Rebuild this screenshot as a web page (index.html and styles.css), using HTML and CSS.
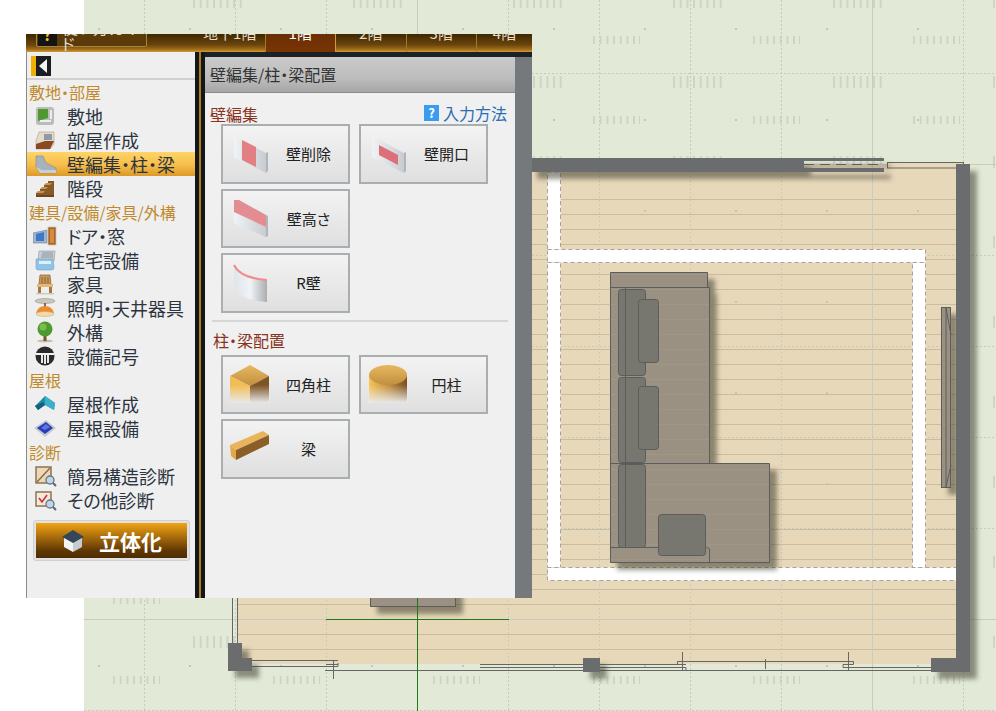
FILE: index.html
```html
<!DOCTYPE html>
<html lang="ja">
<head>
<meta charset="utf-8">
<title>壁編集/柱・梁配置</title>
<link rel="stylesheet" href="styles.css">
</head>
<body>
<div class="page">

	<!-- floor plan canvas, drawn in page coordinates -->
	<svg class="plan" viewBox="84 0 912 711" width="912" height="711">
		<defs>
			<pattern id="ticks" patternUnits="userSpaceOnUse" width="160" height="80">
				<path d="M34 -4v8M40.7 -4v8M47.4 -4v8M54 -4v8M60.7 -4v8M67.4 -4v8M74 -4v8M80.7 -4v8" stroke="#cdd5c7" stroke-width="2" transform="translate(0 4)"/>
				<path d="M34 76v8M40.7 76v8M47.4 76v8M54 76v8M60.7 76v8M67.4 76v8M74 76v8M80.7 76v8" stroke="#cdd5c7" stroke-width="2"/>
				<path d="M114 36v8M120.7 36v8M127.4 36v8M134 36v8M140.7 36v8M147.4 36v8M154 36v8M160 36v8" stroke="#cdd5c7" stroke-width="2"/>
			</pattern>
			<pattern id="dots" patternUnits="userSpaceOnUse" width="91" height="91">
				<rect x="7" y="28" width="2" height="2" fill="#bfc7bb"/>
			</pattern>
			<pattern id="planks" patternUnits="userSpaceOnUse" width="15" height="15">
				<rect x="0" y="4" width="15" height="1" fill="#cbbc9f"/>
			</pattern>
			<filter id="shade" x="-20%" y="-20%" width="140%" height="140%">
				<feDropShadow dx="7" dy="7" stdDeviation="2.5" flood-color="#3c3c30" flood-opacity=".55"/>
			</filter>
			<filter id="blurSoft"><feGaussianBlur stdDeviation=".35"/></filter>
			<linearGradient id="goldH" x1="0" x2="1" y1="0" y2="0">
				<stop offset="0" stop-color="#f7c45a"/><stop offset=".55" stop-color="#c08a3a"/><stop offset="1" stop-color="#7a5020"/>
			</linearGradient>
			<linearGradient id="goldTop" x1="0" x2="0" y1="0" y2="1">
				<stop offset="0" stop-color="#e8b860"/><stop offset="1" stop-color="#c08f40"/>
			</linearGradient>
			<linearGradient id="fade" x1="0" x2="0" y1="0" y2="1">
				<stop offset="0" stop-color="#e9e9e9" stop-opacity="0"/><stop offset="1" stop-color="#e9e9e9"/>
			</linearGradient>
			<linearGradient id="wallFace" x1="0" x2="1" y1="0" y2="0">
				<stop offset="0" stop-color="#f0f3f6"/><stop offset="1" stop-color="#c8ccd0"/>
			</linearGradient>
			<linearGradient id="rWall" x1="0" x2="1" y1="0" y2="0">
				<stop offset="0" stop-color="#dfe5ea"/><stop offset=".5" stop-color="#f0f3f6"/><stop offset="1" stop-color="#a9adb0"/>
			</linearGradient>
			<linearGradient id="capGrad" x1="0" x2="0" y1="0" y2="1">
				<stop offset="0" stop-color="#3c3c3c"/><stop offset="1" stop-color="#1c2a38"/>
			</linearGradient>
		</defs>

		<rect x="84" y="0" width="912" height="711" fill="#e2ead7"/>
		<rect x="84" y="0" width="912" height="711" fill="url(#ticks)"/>

		<rect x="237" y="165" width="719" height="499" fill="#e8d8ba"/>
		<rect x="237" y="190" width="719" height="474" fill="url(#planks)"/>
		<rect x="84" y="0" width="912" height="711" fill="url(#dots)"/>

		<!-- grid -->
		<g fill="none" stroke="#c4cbbf" stroke-width="1">
			<path stroke-dasharray="2 2" d="M144.5 0V711M235.5 0V711M326.5 0V711M508.5 0V711M599.5 0V711M690.5 0V711M781.5 0V711M963.5 0V711M84 73.5H996M84 255.5H996M84 346.5H996M84 437.5H996M84 528.5H996M84 710.5H996"/>
			<path stroke="#c9cbbf" d="M417.5 0V711M872.5 0V711M84 164.5H996M84 619.5H996"/>
		</g>

		<!-- selected wall outline -->
		<g fill="#fff" stroke="#a8a29a" stroke-dasharray="4 3">
			<rect x="547.5" y="172" width="13" height="78"/>
			<rect x="547.5" y="249.5" width="378" height="13"/>
			<rect x="547.5" y="262.5" width="13" height="305"/>
			<rect x="912.5" y="262.5" width="13" height="305"/>
			<rect x="547.5" y="567.5" width="410" height="13"/>
		</g>

		<!-- furniture -->
		<g filter="url(#shade)" fill="#9a9182" stroke="#5c5c5c">
			<path d="M610.5 272.5H707.5V287.5H709.5V463.5H769.5V562.5H610.5Z"/>
			<rect x="370.5" y="560" width="85" height="46.5"/>
			<rect x="941.5" y="307.5" width="9" height="180"/>
		</g>
		<rect x="610" y="272" width="160" height="291" fill="url(#planks)" opacity=".12"/>
		<g fill="none" stroke="#5c5c5c">
			<path d="M610.5 287.5H709.5M610.5 463.5H709.5M610.5 547.5H706.5Q709.5 547.5 709.5 550V562"/>
			<path d="M625.5 288V547M946 308V487M946 308L951 335M946 487L951 465"/>
		</g>
		<g fill="#77766f" stroke="#5c5c5c">
			<rect x="618.5" y="289.5" width="27" height="86" rx="3"/>
			<rect x="618.5" y="377.5" width="27" height="85" rx="3"/>
			<rect x="618.5" y="464.5" width="27" height="83" rx="3"/>
			<rect x="638.5" y="299.5" width="20" height="63" rx="3"/>
			<rect x="638.5" y="386.5" width="20" height="63" rx="3"/>
			<rect x="658.5" y="514.5" width="47" height="41" rx="3"/>
		</g>
		<path d="M625.5 288V547" stroke="#5c5c5c" fill="none"/>

		<!-- thin wall and window lines -->
		<g fill="none" stroke="#666">
			<path d="M232.5 590V643M237.5 590V643"/>
			<path d="M252 660.5H338M252 666.5H338M338 666.5V663M325 670.5H600M600 664.5H682M600 667.5H686V670.5"/>
			<path d="M333.5 660V679M682.5 652V670M765.5 659V669M848.5 652V670"/>
			<path d="M677.5 661.5H853.5V664.5H843M677.5 661.5V664.5H686"/>
			<path d="M843 664.5V667.5H931M843 670.5H931M600 670.5H848"/>
			<path d="M480 664.5H600M480 667.5H583M326 664.5H338"/>
			<path d="M804 164.5H884" stroke-dasharray="10 6"/>
			<rect x="887.5" y="162.5" width="76" height="5.5" fill="#e8d8ba"/>
		</g>

		<!-- structural walls -->
		<g filter="url(#shade)" fill="#6b6c6e">
			<rect x="530" y="158" width="274" height="14"/>
			<rect x="804" y="158" width="80" height="3"/>
			<rect x="804" y="168" width="80" height="4"/>
			<rect x="956" y="164" width="14" height="508"/>
			<rect x="931" y="658" width="39" height="14"/>
			<rect x="583" y="658" width="17" height="14"/>
			<path d="M228 643H242V658H252V671H228Z"/>
		</g>

		<path d="M326 619.5H509M417.5 598V711" fill="none" stroke="#1c7a1c"/>
	</svg>

	<div class="panel">
		<div class="topbar">
			<div class="guide-wrap"><span class="guide"><span class="guide-mark">?</span>使い方ガイド</span></div>
			<span class="tab">地下1階</span>
			<span class="tab tab-on">1階</span>
			<span class="tab">2階</span>
			<span class="tab">3階</span>
			<span class="tab tab-end">4階</span>
		</div>

		<div class="main">
			<div class="side">
				<div class="toggle-row"><span class="toggle"><span class="toggle-arrow"></span></span></div>

				<div class="group">敷地・部屋</div>
				<div class="item">
					<svg class="ico" viewBox="0 0 24 22"><rect x="3" y="2" width="18" height="18" rx="3" fill="#b9bcb8"/><path d="M5 4H15V13L5 16Z" fill="#4f9a2e"/><rect x="7" y="15" width="11" height="2" fill="#eee"/><rect x="17" y="5" width="2" height="9" fill="#eee"/></svg>
					敷地
				</div>
				<div class="item">
					<svg class="ico" viewBox="0 0 24 22"><path d="M6 3H21V15L17 20H3V12Z" fill="#e4dcc8" stroke="#a89c88" stroke-width=".6"/><rect x="11" y="5" width="8" height="6" fill="#8f9aa6"/><path d="M3 15L12 12H21L17 20H3Z" fill="#8a4a22"/></svg>
					部屋作成
				</div>
				<div class="item item-on">
					<svg class="ico" viewBox="0 0 24 22"><path d="M3 3L10 3L13 10L23 15V20L7 20L3 14Z" fill="#a7b2bc" stroke="#7f8a94" stroke-width=".6"/><path d="M3 14L7 20H23V17H9Z" fill="#c8d0d6"/></svg>
					壁編集・柱・梁
				</div>
				<div class="item">
					<svg class="ico" viewBox="0 0 24 22"><path d="M3 20V16H7V12H11V8H15V4H21V20Z" fill="#8a5a28"/><path d="M3 16H10L12 14H5ZM7 12H13L15 10H9ZM11 8H17L19 6H13Z" fill="#c79458"/><path d="M3 20H21V18H3Z" fill="#6e4520"/></svg>
					階段
				</div>

				<div class="group">建具/設備/家具/外構</div>
				<div class="item">
					<svg class="ico" viewBox="0 0 24 22"><path d="M0 8L14 5V18L0 18Z" fill="#9fb4cc" stroke="#6f7f90" stroke-width=".6"/><path d="M3 9L11 7V16L3 16Z" fill="#3f78c8"/><rect x="15" y="2" width="8" height="18" fill="#a6652a" stroke="#c9c3b4" stroke-width=".8"/><rect x="17" y="4" width="4" height="14" fill="#d98a3a"/></svg>
					ドア・窓
				</div>
				<div class="item">
					<svg class="ico" viewBox="0 0 24 22"><path d="M6 2H22L21 12H5Z" fill="#c9cfd4" stroke="#8b96a0" stroke-width=".6"/><path d="M9 4H20M8.500 6H20M8 8H20" stroke="#8b96a0"/><path d="M3 10H20L21 19Q21 21 18 21H6Q3 21 3 19Z" fill="#8fc4ea" stroke="#7ea0bc" stroke-width=".6"/><path d="M6 12H18V15H6Z" fill="#dff0fa"/></svg>
					住宅設備
				</div>
				<div class="item">
					<svg class="ico" viewBox="0 0 24 22"><path d="M7 2H17L18 11H6Z" fill="#c99a58" stroke="#8a6030" stroke-width=".7"/><path d="M9 4V10M12 4V10M15 4V10" stroke="#8a6030"/><path d="M4 11H20V14H4Z" fill="#e0b878"/><path d="M5 14H8V20H5ZM16 14H19V20H16Z" fill="#a8753c"/><path d="M3 20H21V21.500H3Z" fill="#c8cdc8"/></svg>
					家具
				</div>
				<div class="item">
					<svg class="ico" viewBox="0 0 24 22"><ellipse cx="12" cy="4" rx="10" ry="2.500" fill="#c9c7bc" stroke="#9a988c" stroke-width=".6"/><rect x="11" y="6" width="2" height="4" fill="#8a6a40"/><path d="M3 16Q5 9 12 9T21 16Z" fill="#ef8a2e"/><ellipse cx="12" cy="17" rx="9" ry="2.500" fill="#f4d9a0" stroke="#b0a890" stroke-width=".5"/></svg>
					照明・天井器具
				</div>
				<div class="item">
					<svg class="ico" viewBox="0 0 24 22"><ellipse cx="12" cy="20" rx="8" ry="1.500" fill="#c7c0a8"/><rect x="10.500" y="13" width="3" height="7" fill="#7a5228"/><circle cx="12" cy="8" r="7.500" fill="#4f9a2e"/><circle cx="10" cy="6" r="3.500" fill="#78be4e"/></svg>
					外構
				</div>
				<div class="item">
					<svg class="ico" viewBox="0 0 24 22"><circle cx="12" cy="11" r="9.500" fill="#2a2a2a"/><path d="M3 8H21V10H3Z" fill="#f2f2f2"/><path d="M8 10H10V18H8ZM14 10H16V18H14ZM11 10H13V19H11Z" fill="#e8e8e8"/></svg>
					設備記号
				</div>

				<div class="group">屋根</div>
				<div class="item">
					<svg class="ico" viewBox="0 0 24 22"><path d="M2 13L12 3L22 10L21 17L12 12L5 17Z" fill="#1f8fae"/><path d="M12 3L22 10L21 17L12 12Z" fill="#3ab0c8"/><path d="M2 13L5 17L12 12L10 9Z" fill="#14607a"/></svg>
					屋根作成
				</div>
				<div class="item">
					<svg class="ico" viewBox="0 0 24 22"><path d="M1 11L13 3L23 11L12 20Z" fill="#c8c8d4"/><path d="M4 11L13 5L20 11L12 17Z" fill="#2a3eb4"/><path d="M8 11L13 7L17 10L12 13Z" fill="#5c78e0"/></svg>
					屋根設備
				</div>

				<div class="group">診断</div>
				<div class="item">
					<svg class="ico" viewBox="0 0 24 22"><rect x="3" y="2" width="15" height="16" fill="#ead8b8" stroke="#8a6a48" stroke-width="1.400"/><path d="M4 17L17 3" stroke="#8a6a48" stroke-width="1.400"/><circle cx="17" cy="15" r="4" fill="#bcd8ee" stroke="#6a7480" stroke-width="1.300"/><path d="M20 18L23 21" stroke="#5a6470" stroke-width="2"/></svg>
					簡易構造診断
				</div>
				<div class="item">
					<svg class="ico" viewBox="0 0 24 22"><rect x="3" y="3" width="15" height="14" fill="#f4ead8" stroke="#8a6a48" stroke-width="1.400"/><path d="M6 9L9 13L14 6" fill="none" stroke="#d02a4a" stroke-width="1.600"/><circle cx="17" cy="15" r="4" fill="#bcd8ee" stroke="#6a7480" stroke-width="1.300"/><path d="M20 18L23 21" stroke="#5a6470" stroke-width="2"/></svg>
					その他診断
				</div>

				<div class="rise-wrap">
					<div class="rise">
						<svg class="rise-ico" viewBox="0 0 24 24"><path d="M12 1L23 8L12 14L1 8Z" fill="#33465a"/><path d="M3 9L12 14V23L3 18Z" fill="#f4f4f4"/><path d="M21 9L12 14V23L21 18Z" fill="#c4ccd4"/></svg>
						立体化
					</div>
				</div>
			</div>

			<div class="split"></div>

			<div class="content">
				<div class="title">壁編集/柱・梁配置</div>

				<div class="sec-head">
					<span class="sec-name">壁編集</span>
					<span class="help"><span class="help-mark">?</span>入力方法</span>
				</div>
				<div class="btns">
					<div class="btn">
						<svg class="btn-ico" viewBox="0 0 36 38"><path d="M1 1L33 18V38L1 22Z" fill="url(#wallFace)"/><path d="M33 18L35 17V36L33 38Z" fill="#b0b5b9"/><path d="M9 5L23 12V32L9 25Z" fill="#e27f85"/></svg>
						<span>壁削除</span>
					</div>
					<div class="btn">
						<svg class="btn-ico" viewBox="0 0 36 38"><path d="M1 1L33 18V38L1 22Z" fill="url(#wallFace)"/><path d="M33 18L35 17V36L33 38Z" fill="#b0b5b9"/><path d="M8 10L27 20V30L8 20Z" fill="#de6f78"/></svg>
						<span>壁開口</span>
					</div>
					<div class="btn">
						<svg class="btn-ico" viewBox="0 0 36 38"><path d="M1 13L33 28V38L1 24Z" fill="url(#wallFace)"/><path d="M1 1L6 1L33 16V28L1 13Z" fill="#e28d92"/><path d="M33 16L35 17V37L33 38Z" fill="#b0b5b9"/></svg>
						<span>壁高さ</span>
					</div>
					<div class="btn-gap"></div>
					<div class="btn">
						<svg class="btn-ico" viewBox="0 0 36 38"><path d="M1 1Q7 14 34 16V38Q10 37 1 24Z" fill="url(#rWall)"/><path d="M1 1Q7 14 34 16" fill="none" stroke="#f08c8c" stroke-width="2"/></svg>
						<span>R壁</span>
					</div>
				</div>

				<div class="rule"></div>

				<div class="sec-head sec-head2">
					<span class="sec-name">柱・梁配置</span>
				</div>
				<div class="btns">
					<div class="btn">
						<svg class="btn-ico btn-ico-wide" viewBox="0 0 40 38"><path d="M20 0L39 11L20 21L0 11Z" fill="url(#goldTop)"/><path d="M0 11L20 21V38H0Z" fill="#f2bd55"/><path d="M39 11L20 21V38H39Z" fill="#7e5424"/><rect x="0" y="20" width="40" height="18" fill="url(#fade)"/></svg>
						<span>四角柱</span>
					</div>
					<div class="btn">
						<svg class="btn-ico btn-ico-wide" viewBox="0 0 40 38"><path d="M1 10V38H39V10Z" fill="url(#goldH)"/><ellipse cx="20" cy="10" rx="19" ry="10" fill="url(#goldTop)"/><rect x="0" y="20" width="40" height="18" fill="url(#fade)"/></svg>
						<span>円柱</span>
					</div>
					<div class="btn">
						<svg class="btn-ico btn-ico-wide" viewBox="0 0 40 38"><path d="M0 15L33 1L39 5L6 20Z" fill="#e8b45c"/><path d="M6 20L39 5V14L6 30Z" fill="#8a5e26"/><path d="M0 15L6 20V30L1 26Z" fill="#e0a848"/></svg>
						<span>梁</span>
					</div>
				</div>
			</div>

			<div class="rail"></div>
		</div>
	</div>
</div>
</body>
</html>
```

FILE: styles.css
```css
html, body {
	margin: 0;
	padding: 0;
	background: #fff;
}
body {
	font-family: "Noto Sans CJK JP", "Noto Sans", sans-serif;
	font-feature-settings: "palt";
}
.page {
	position: relative;
	width: 996px;
	height: 711px;
	overflow: hidden;
}
.plan {
	position: absolute;
	left: 84px;
	top: 0;
	display: block;
}

/* tool panel floats over the canvas */
.panel {
	position: absolute;
	left: 26px;
	top: 34px;
	width: 506px;
	height: 564px;
	display: flex;
	flex-direction: column;
}

.topbar {
	height: 18px;
	flex: none;
	display: flex;
	align-items: flex-end;
	overflow: hidden;
	background: linear-gradient(#3e2702, #6a440c 60%, #a06c18 85%, #d09a38);
	color: #e6dcc8;
	font-size: 15px;
}
.guide-wrap {
	width: 169px;
	height: 30px;
	flex: none;
	box-sizing: border-box;
	padding: 0 0 5px 10px;
	display: flex;
	align-items: flex-end;
}
.guide {
	width: 111px;
	height: 25px;
	box-sizing: border-box;
	display: flex;
	align-items: center;
	border: 1px solid #a8853f;
	border-radius: 2px;
	background: #5a3a08;
	font-size: 16px;
	line-height: 1;
}
.guide-mark {
	width: 20px;
	height: 23px;
	margin: 0 5px 0 1px;
	background: #141414;
	color: #f0c020;
	font-weight: 700;
	text-align: center;
	line-height: 23px;
}
.tab {
	width: 70.5px;
	height: 30px;
	flex: none;
	box-sizing: border-box;
	text-align: center;
	line-height: 22px;
	border-right: 1px solid #a07828;
}
.tab-on {
	background: linear-gradient(#5e2c04, #7a3404);
	color: #fff;
	border-right-color: #d09a38;
}
.tab-end {
	width: 55px;
	border-right: 0;
}

.main {
	flex: 1;
	display: flex;
	min-height: 0;
}

.side {
	width: 169px;
	flex: none;
	box-sizing: border-box;
	border-left: 1px solid #8a8a8a;
	background: #efefef;
	color: #2c3440;
	font-size: 18px;
}
.toggle-row {
	height: 27px;
	box-sizing: border-box;
	padding: 4px 0 0 4px;
	border-bottom: 2px solid #d0d0d0;
	margin-bottom: 0;
	height: 28px;
}
.toggle {
	display: block;
	width: 15px;
	height: 20px;
	border-left: 5px solid #f0b000;
	background: #1a1d22;
	position: relative;
}
.toggle-arrow {
	position: absolute;
	left: 3px;
	top: 3px;
	border-style: solid;
	border-width: 7px 8px 7px 0;
	border-color: transparent #f4f4f4 transparent transparent;
}
.group {
	height: 24px;
	line-height: 24px;
	padding-left: 2px;
	font-size: 16px;
	color: #c08a2c;
	white-space: nowrap;
}
.item {
	height: 24px;
	display: flex;
	align-items: center;
	gap: 10px;
	padding-left: 6px;
	line-height: 24px;
	white-space: nowrap;
}
.item-on {
	background: linear-gradient(#ffd468, #f6bd4a 55%, #dc9a28);
}
.ico {
	width: 24px;
	height: 22px;
	flex: none;
	filter: url(#blurSoft);
}
.rise-wrap {
	padding: 8px 5px 0 6px;
}
.rise {
	height: 41px;
	box-sizing: border-box;
	display: flex;
	align-items: center;
	justify-content: center;
	gap: 14px;
	padding-right: 0;
	border: 3px solid #e2e2e2;
	outline: 1px solid #d0d0d0;
	outline-offset: -1px;
	border-radius: 3px;
	background: linear-gradient(#f0a414, #a86c0c 40%, #5e3604 80%, #4e2c02);
	color: #fff;
	font-size: 21px;
	font-weight: 700;
}
.rise-ico {
	width: 24px;
	height: 24px;
}

.split {
	width: 10px;
	flex: none;
	background: linear-gradient(90deg, #14171a 0 4px, #b07c20 4px 6px, #14171a 6px);
}

.content {
	width: 310px;
	flex: none;
	box-sizing: border-box;
	border-top: 5px solid #1c2125;
	background: #f0f0f0;
	color: #222;
}
.title {
	height: 36px;
	box-sizing: border-box;
	padding-left: 5px;
	line-height: 35px;
	font-size: 16px;
	color: #333;
	background: linear-gradient(#cacaca, #bdbdbd 60%, #a6a6a6);
	border-bottom: 1px solid #8c8c8c;
}
.sec-head {
	height: 31px;
	box-sizing: border-box;
	padding: 9px 8px 0 5px;
	display: flex;
	justify-content: space-between;
	line-height: 24px;
	font-size: 16px;
}
.sec-head2 {
	height: 33px;
	padding: 6px 8px 0 8px;
}
.sec-name {
	color: #8a3220;
}
.help {
	display: flex;
	align-items: center;
	color: #2a6db4;
}
.help-mark {
	width: 15px;
	height: 16px;
	margin-right: 4px;
	background: #3a9cf0;
	color: #fff;
	font-size: 13px;
	font-weight: 700;
	line-height: 16px;
	text-align: center;
}
.btns {
	display: grid;
	grid-template-columns: 129px 129px;
	grid-auto-rows: 59.5px;
	gap: 5px 9px;
	padding-left: 16px;
}
.btn {
	box-sizing: border-box;
	display: flex;
	align-items: center;
	padding-left: 10px;
	border: 2px solid #a9aeb1;
	background: linear-gradient(#f3f3f3, #dfdfdf);
	font-size: 15px;
	line-height: 1;
	color: #222;
}
.btn span {
	flex: 1;
	text-align: center;
	padding-right: 0;
}
.btn-ico {
	width: 36px;
	height: 38px;
	flex: none;
}
.btn-ico-wide {
	width: 40px;
	margin-left: -3px;
	margin-right: -1px;
}
.btn-gap {
	visibility: hidden;
}
.rule {
	height: 2px;
	margin: 7px 7px 0 7px;
	background: #d6d6d6;
}

.rail {
	flex: 1;
	background: linear-gradient(#1c2125 0 5px, #75797c 5px);
}
```
